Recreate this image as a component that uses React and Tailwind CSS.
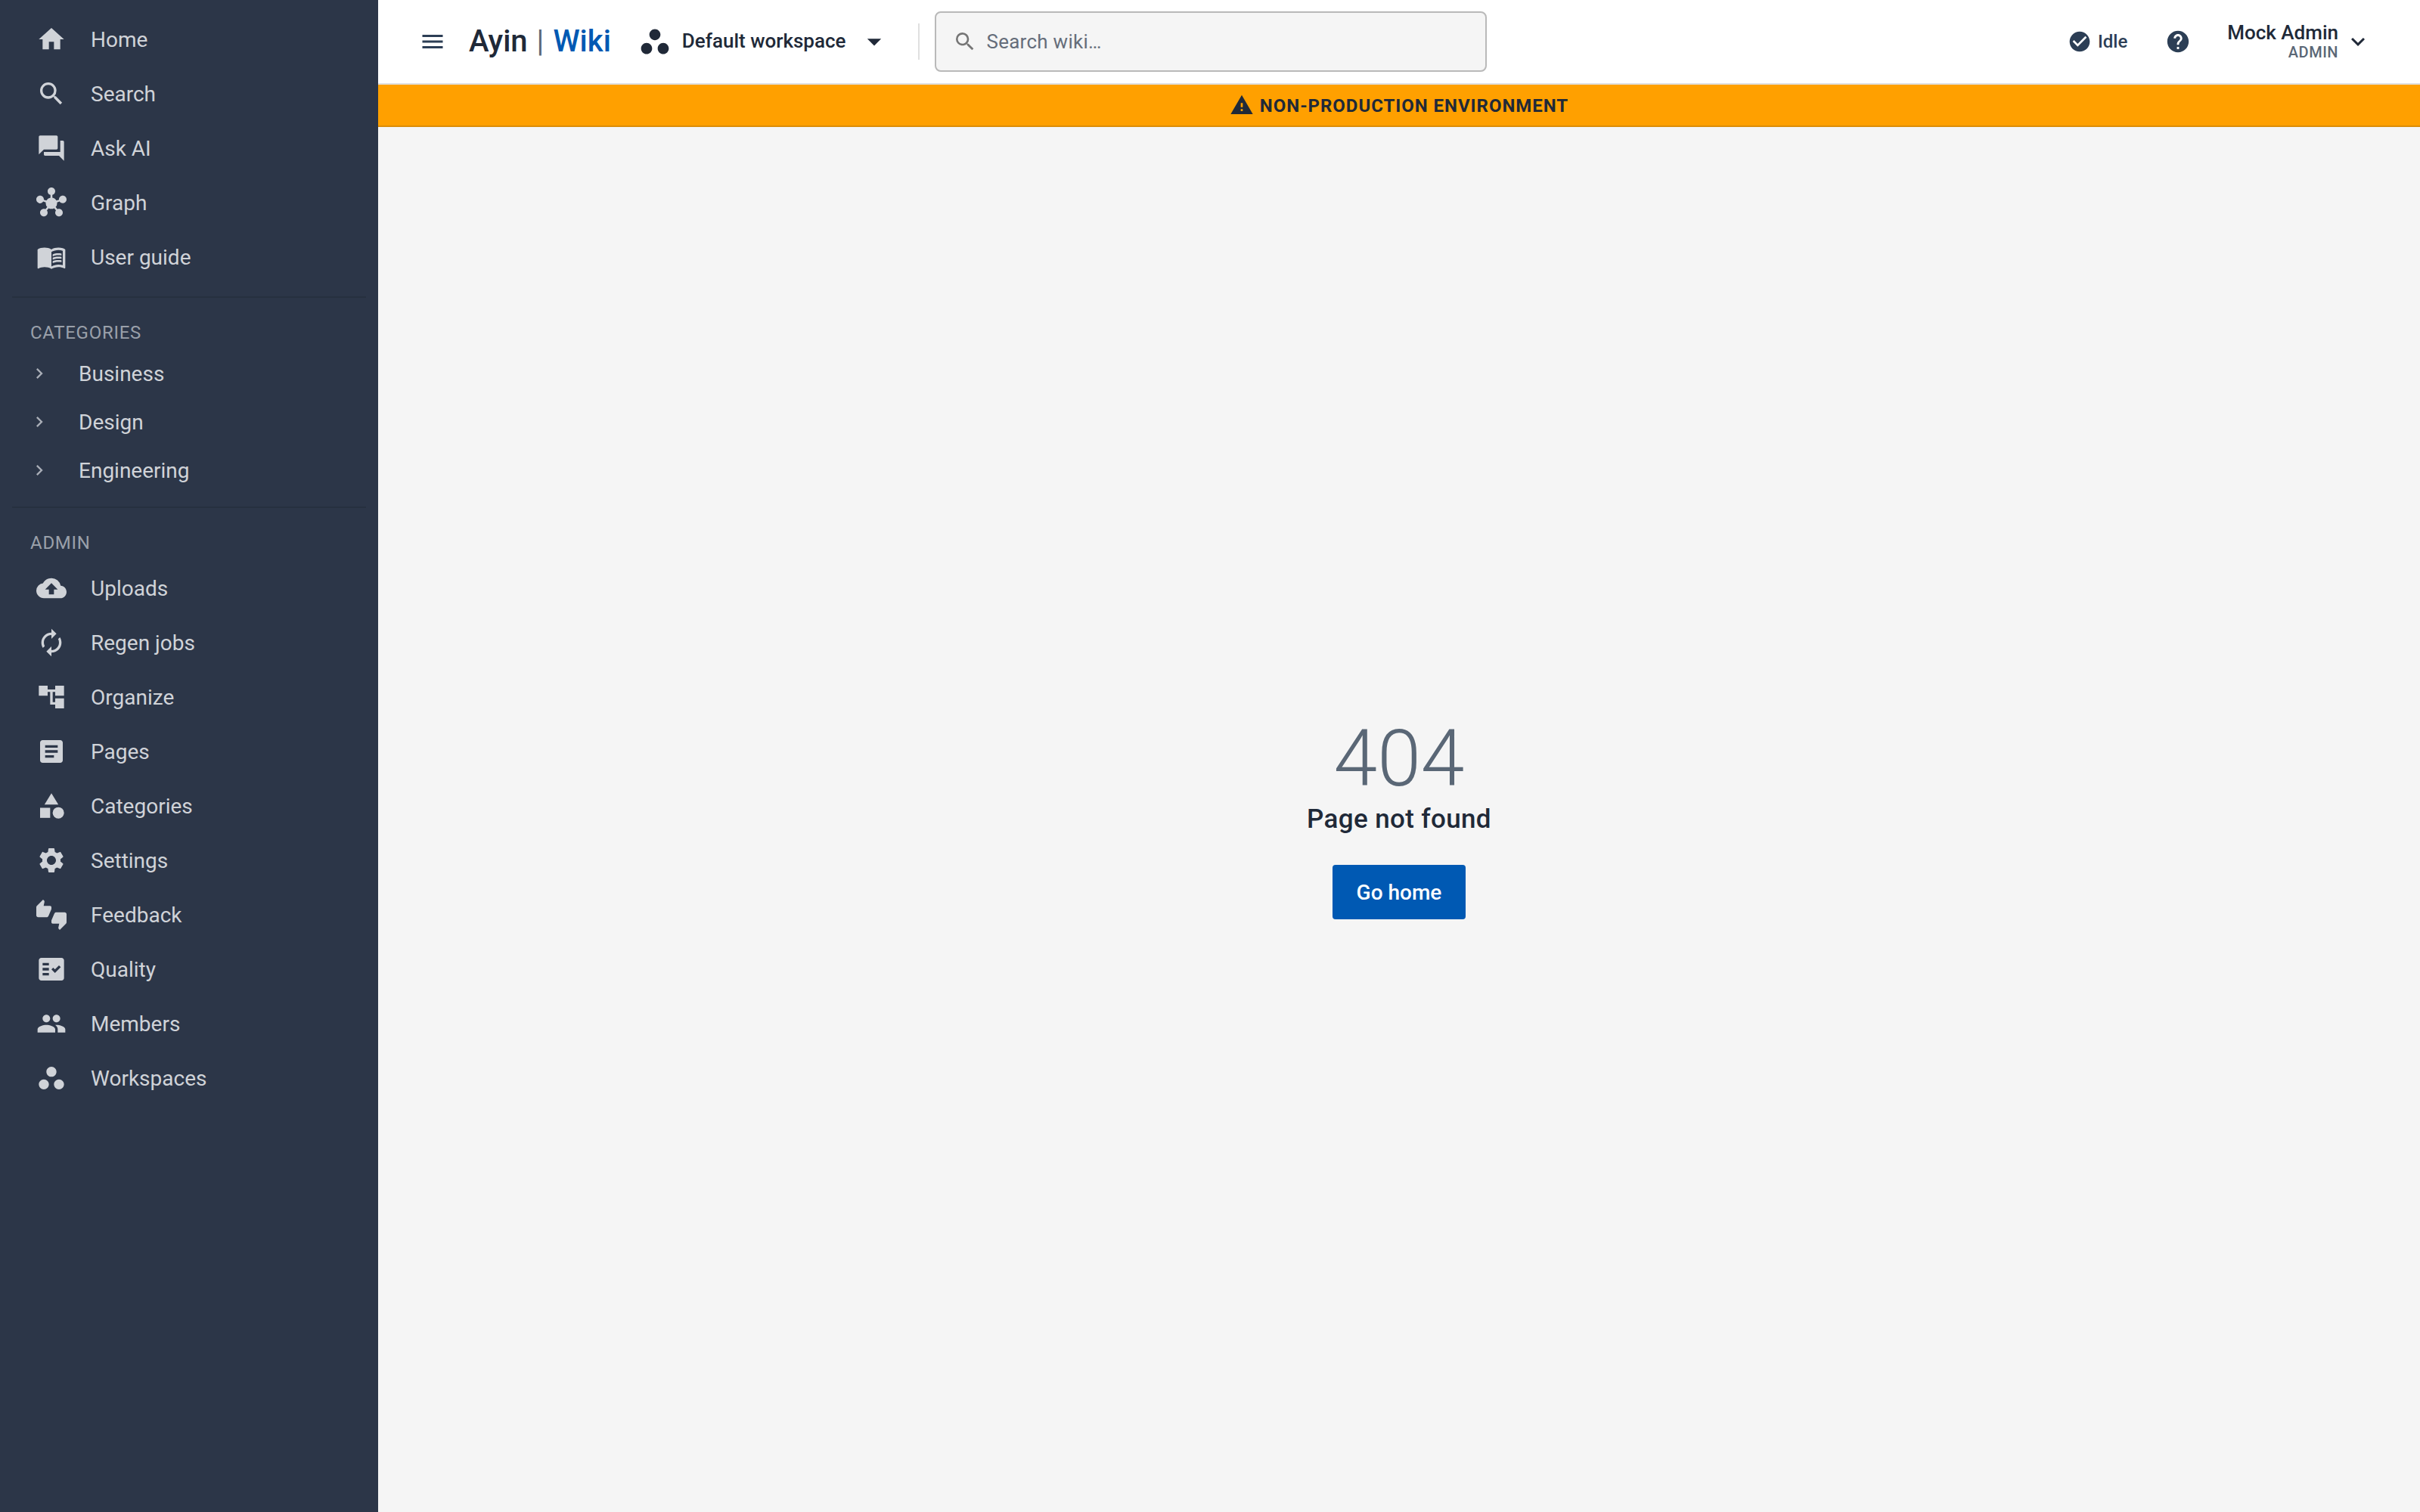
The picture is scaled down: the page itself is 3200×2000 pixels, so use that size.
import {
  MdAccountTree,
  MdArrowDropDown,
  MdArticle,
  MdAutorenew,
  MdBackup,
  MdCategory,
  MdCheckCircle,
  MdChevronRight,
  MdExpandMore,
  MdFactCheck,
  MdHelp,
  MdHome,
  MdHub,
  MdMenu,
  MdMenuBook,
  MdPeople,
  MdQuestionAnswer,
  MdSearch,
  MdSettings,
  MdThumbsUpDown,
  MdWarning,
  MdWorkspaces,
} from "react-icons/md";

const mainLinks = [
  { label: "Home", Icon: MdHome },
  { label: "Search", Icon: MdSearch },
  { label: "Ask AI", Icon: MdQuestionAnswer },
  { label: "Graph", Icon: MdHub },
  { label: "User guide", Icon: MdMenuBook },
];

const categories = ["Business", "Design", "Engineering"];

const adminLinks = [
  { label: "Uploads", Icon: MdBackup },
  { label: "Regen jobs", Icon: MdAutorenew },
  { label: "Organize", Icon: MdAccountTree },
  { label: "Pages", Icon: MdArticle },
  { label: "Categories", Icon: MdCategory },
  { label: "Settings", Icon: MdSettings },
  { label: "Feedback", Icon: MdThumbsUpDown },
  { label: "Quality", Icon: MdFactCheck },
  { label: "Members", Icon: MdPeople },
  { label: "Workspaces", Icon: MdWorkspaces },
];

function NavList({ links }) {
  return (
    <ul>
      {links.map(({ label, Icon }) => (
        <li key={label}>
          <a href="#" className="flex h-18 items-center gap-8 px-12 text-[28px]">
            <Icon className="size-10 shrink-0" />
            <span className="pt-0.5">{label}</span>
          </a>
        </li>
      ))}
    </ul>
  );
}

function SectionTitle({ children }) {
  return (
    <h2 className="px-10 text-2xl leading-8 tracking-[0.03em] text-[#9aa0aa] uppercase">
      {children}
    </h2>
  );
}

function Sidebar() {
  return (
    <nav className="w-[500px] shrink-0 bg-[#2c3648] py-4 text-[#d0d3d8]">
      <NavList links={mainLinks} />
      <hr className="mx-4 my-4 border-t-2 border-[#26303f]" />
      <div className="pt-3.5">
        <SectionTitle>Categories</SectionTitle>
        <ul className="pt-1.5">
          {categories.map((name) => (
            <li key={name} className="flex h-16 items-center pl-[38px]">
              <button type="button" aria-label={`Expand ${name}`} className="text-[#a9aeb7]">
                <MdChevronRight className="size-7" />
              </button>
              <a href="#" className="pt-0.5 pl-[38px] text-[28px]">
                {name}
              </a>
            </li>
          ))}
        </ul>
      </div>
      <hr className="mx-4 my-4 border-t-2 border-[#26303f]" />
      <div className="pt-3.5">
        <SectionTitle>Admin</SectionTitle>
        <div className="pt-2">
          <NavList links={adminLinks} />
        </div>
      </div>
    </nav>
  );
}

function Header() {
  return (
    <header className="flex h-28 items-center border-b-2 border-[#e0e0e0] bg-white pr-16 pl-[54px]">
      <button type="button" aria-label="Toggle menu" className="text-[#2c3e55]">
        <MdMenu className="size-9" />
      </button>
      <a href="#" className="flex gap-3 pl-[30px] text-[40px] font-medium text-[#202938]">
        Ayin
        <span className="font-normal text-[#5a6776]">|</span>
        <span className="text-[#0059b3]">Wiki</span>
      </a>
      <button
        type="button"
        className="flex items-center pl-9 text-[26px] font-medium text-[#202938]"
      >
        <MdWorkspaces className="size-11" />
        <span className="pb-0.5 pl-3.5">Default workspace</span>
        <MdArrowDropDown className="ml-4 size-11" />
      </button>
      <div className="ml-9 h-12 w-0.5 bg-[#e0e0e0]" />
      <label className="ml-5 flex h-20 w-[730px] items-center rounded-lg border-2 border-[#b9b9b9] bg-[#f5f5f5] px-[22px] text-[#757575]">
        <MdSearch className="size-8" />
        <input
          type="search"
          aria-label="Search wiki"
          placeholder="Search wiki…"
          className="ml-3 min-w-0 grow bg-transparent text-[26px] tracking-[0.01em] outline-none placeholder:text-[#656d7a]"
        />
      </label>
      <div className="ml-auto flex items-center">
        <div className="flex items-center gap-2 text-2xl font-medium text-[#2c3e55]">
          <MdCheckCircle className="size-8" />
          Idle
        </div>
        <button type="button" aria-label="Help" className="pl-[50px] text-[#2c3e55]">
          <MdHelp className="size-[34px]" />
        </button>
        <button type="button" className="flex items-center gap-2 pl-12 text-[#202938]">
          <span className="flex flex-col items-end">
            <span className="text-[26px] leading-7 font-medium">Mock Admin</span>
            <span className="text-xl leading-6 font-medium tracking-wide text-[#5a6776]">ADMIN</span>
          </span>
          <MdExpandMore className="size-9" />
        </button>
      </div>
    </header>
  );
}

export default function App() {
  return (
    <div className="flex min-h-screen bg-[#f5f5f5] font-['Roboto',sans-serif]">
      <Sidebar />
      <div className="flex grow flex-col">
        <Header />
        <div
          role="status"
          className="flex h-14 items-center justify-center gap-2 border-b-2 border-[#db8d07] bg-[#ffa000] text-2xl font-bold tracking-[0.04em] text-[#202938]"
        >
          <MdWarning className="size-8" />
          <span className="pt-0.5">NON-PRODUCTION ENVIRONMENT</span>
        </div>
        <main className="flex grow flex-col items-center justify-center">
          <h1 className="mb-1 text-[104px] leading-[104px] font-light text-[#5a6776]">404</h1>
          <p className="text-[35px] leading-12 font-medium tracking-[0.01em] text-[#202938]">
            Page not found
          </p>
          <a
            href="#"
            className="mt-9 flex h-18 items-center rounded-sm bg-[#0059b3] px-8 text-[28px] font-medium text-white"
          >
            <span className="pt-0.5">Go home</span>
          </a>
        </main>
      </div>
    </div>
  );
}
